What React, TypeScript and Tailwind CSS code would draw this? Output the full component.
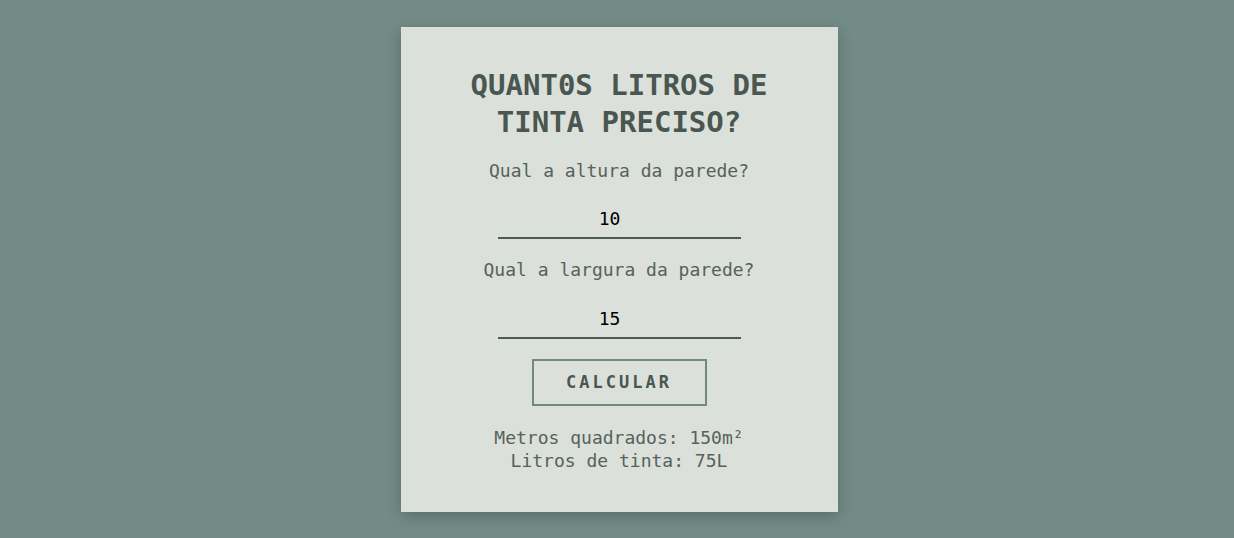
import { useState } from "react";

export default function App() {
    const [altura, setAltura] = useState("10");
    const [largura, setLargura] = useState("15");

    const area = Number(altura) * Number(largura);
    const litros = area / 2;

    return (
        <div className="min-h-screen w-full bg-[#738b86] flex justify-center font-['DejaVu_Sans_Mono',monospace]">
            <div className="ml-[4px] mt-[27px] mb-[26px] w-[437px] h-fit bg-[#dbe0da] shadow-[0_4px_14px_rgba(0,0,0,0.22)] flex flex-col items-center pt-[40px] pb-[40px]">
                <h1 className="text-[29px] leading-[37px] font-bold text-[#4a5750] text-center">
                    QUANT0S LITROS DE
                    <br />
                    TINTA PRECISO?
                </h1>

                <label className="mt-[18px] text-[18px] leading-[24px] text-[#56625b]">Qual a altura da parede?</label>
                <input
                    value={altura}
                    onChange={(e) => setAltura(e.target.value)}
                    className="mt-[22px] w-[243px] h-[34px] pb-[6px] pr-[19px] bg-transparent border-b-2 border-[#4d5a52] text-center text-[18px] text-black outline-none"
                />

                <label className="mt-[19px] text-[18px] leading-[24px] text-[#56625b]">Qual a largura da parede?</label>
                <input
                    value={largura}
                    onChange={(e) => setLargura(e.target.value)}
                    className="mt-[23px] w-[243px] h-[34px] pb-[6px] pr-[19px] bg-transparent border-b-2 border-[#4d5a52] text-center text-[18px] text-black outline-none"
                />

                <button className="mt-[20px] w-[175px] h-[47px] border-2 border-[#72897f] text-[17px] font-bold tracking-[3px] text-[#4a5750]">
                    CALCULAR
                </button>

                <div className="mt-[20px] text-[18px] leading-[23px] text-[#56625b] text-center">
                    <p>Metros quadrados: {area}m²</p>
                    <p>Litros de tinta: {litros}L</p>
                </div>
            </div>
        </div>
    );
}
